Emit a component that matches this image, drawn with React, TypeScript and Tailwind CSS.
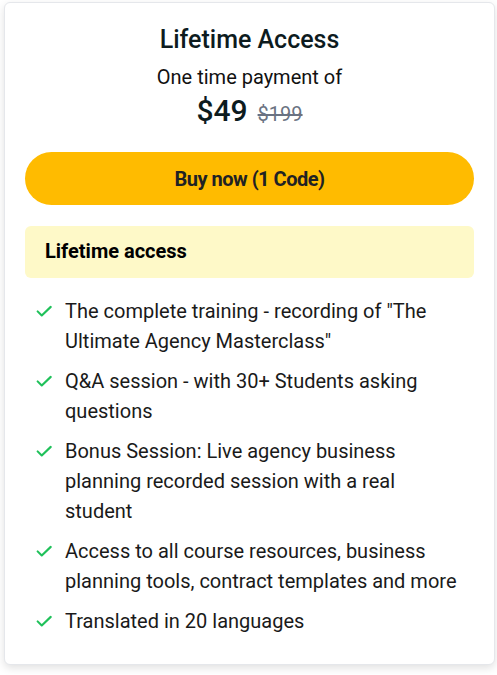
import React from 'react';

const features = [
  'The complete training - recording of "The Ultimate Agency Masterclass"',
  'Q&A session - with 30+ Students asking questions',
  'Bonus Session: Live agency business planning recorded session with a real student',
  'Access to all course resources, business planning tools, contract templates and more',
  'Translated in 20 languages',
];

const Check = () => (
  <svg viewBox="0 0 24 24" className="w-[18px] h-[18px] shrink-0 mt-[6px]" fill="none" stroke="#1fc15a" strokeWidth={2.8} strokeLinecap="round" strokeLinejoin="round">
    <path d="M3.5 12.5l5.5 5.5L21 6.5" />
  </svg>
);

export default function App() {
  return (
    <div className="min-h-screen bg-white px-[4px] pt-[2px] font-['Roboto',sans-serif]">
      <div className="w-[491px] rounded-md border border-gray-200 bg-white shadow-[0_3px_8px_rgba(0,0,0,0.12)] px-5 pt-[22px] pb-[28px]">
        <div className="flex flex-col items-center text-[#0d1b1e]">
          <h2 className="text-[25px] leading-[30px] font-medium">Lifetime Access</h2>
          <p className="mt-[8px] text-[20px] leading-[28px] text-[#111]">One time payment of</p>
          <div className="mt-[2px] flex items-baseline gap-[10px]">
            <span className="text-[30px] leading-[36px] font-medium">$49</span>
            <span className="text-[20px] text-gray-500 line-through">$199</span>
          </div>
        </div>

        <button className="mt-[23px] w-full h-[53px] rounded-full bg-[#ffbb00] text-[20px] font-bold text-[#1f2224] tracking-tight">
          Buy now (1 Code)
        </button>

        <div className="mt-[21px] rounded-md bg-[#fef9c8] px-5 py-[13px]">
          <span className="text-[20px] leading-[24px] font-bold text-black">Lifetime access</span>
        </div>

        <ul className="mt-[18px] flex flex-col gap-[10px] pl-[10px] pr-[12px]">
          {features.map((f) => (
            <li key={f} className="flex items-start gap-[12px]">
              <Check />
              <span className="text-[20px] leading-[30px] text-[#1a1a1a]">{f}</span>
            </li>
          ))}
        </ul>
      </div>
    </div>
  );
}
